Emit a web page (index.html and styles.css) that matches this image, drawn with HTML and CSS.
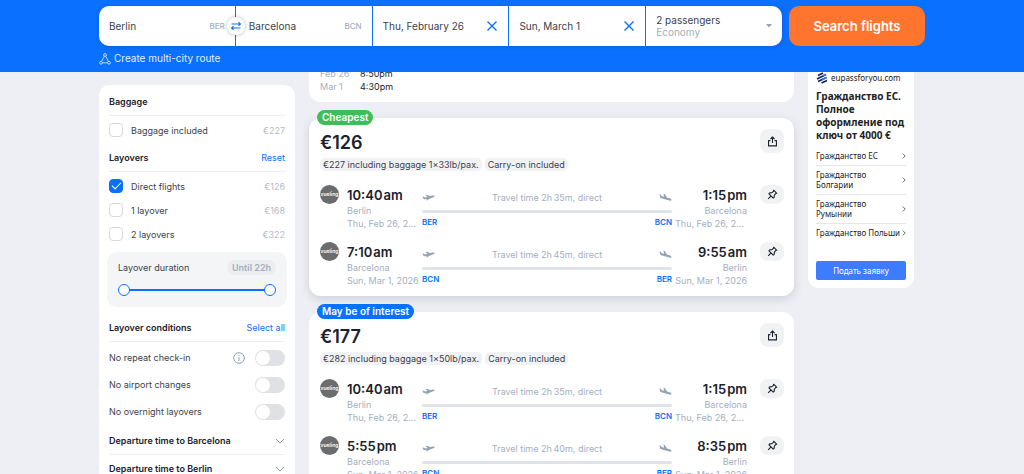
FILE: index.html
```html
<!DOCTYPE html>
<html lang="en">
<head>
<meta charset="utf-8">
<title>Berlin – Barcelona flights</title>
<link rel="stylesheet" href="styles.css">
</head>
<body>
<svg class="sprite" aria-hidden="true">
  <symbol id="takeoff" viewBox="0 0 26 16"><path d="M1 6.500 3 6 6 8 11 6.800 7 3 9.500 2.300 16.500 5.200 21.500 4C23.500 3.500 25 4 25.200 5 25.400 6.200 24.300 7 22.500 7.600L16 9.800 10 13.500 7.500 14 10 11 5.500 11.500C3.800 11.600 3 11 2.600 10.200Z"/></symbol>
  <symbol id="landing" viewBox="0 0 26 18"><path d="M1 2.500 3 3 5.200 6 10 7.400 9 1.500 11.500 2.200 16 9 21 10.500C23.500 11.300 25.200 12.700 24.900 14 24.600 15.400 22.600 15.800 20.500 15.200L4.500 10.600C3 10.100 2.200 9.300 2 8Z"/></symbol>
  <symbol id="share" viewBox="0 0 12 12"><path d="M3.700 5H1.700v5.800h8.600V5H8.300M6 7.700V1.300M3.700 3.400 6 1.100l2.300 2.300"/></symbol>
  <symbol id="pin" viewBox="0 0 12 12"><path d="M7.300 1.300 10.700 4.700 9.500 5 8 6.600 7.800 9.100 6.800 9.900 2.100 5.200 2.900 4.200 5.400 4 7 2.500ZM4.400 7.600 1.300 10.700"/></symbol>
  <symbol id="cross" viewBox="0 0 12 12"><path d="m1.500 1.500 9 9m0-9-9 9"/></symbol>
  <symbol id="down" viewBox="0 0 10 6"><path d="m1 1 4 4 4-4"/></symbol>
  <symbol id="right" viewBox="0 0 4 6"><path d="m.8.600 2.400 2.400L.8 5.400"/></symbol>
</svg>

<header class="header">
  <form class="search">
    <div class="fields">
      <div class="field">
        <input class="field-input" aria-label="From" value="Berlin"><span class="code">BER</span>
        <button class="swap" type="button" aria-label="Swap cities"><svg viewBox="0 0 10 8"><path d="M.5 2h8.700M.8 6h8.700M7.500.300 9.500 2 7.500 3.700M2.500 4.300.500 6l2 1.700"/></svg></button>
      </div>
      <div class="field">
        <input class="field-input" aria-label="To" value="Barcelona"><span class="code">BCN</span>
      </div>
      <div class="field">
        <input class="field-input" aria-label="Departure date" value="Thu, February 26">
        <button class="clear" type="button" aria-label="Clear departure date"><svg><use href="#cross"/></svg></button>
      </div>
      <div class="field">
        <input class="field-input" aria-label="Return date" value="Sun, March 1">
        <button class="clear" type="button" aria-label="Clear return date"><svg><use href="#cross"/></svg></button>
      </div>
      <button class="field passengers" type="button">
        <span class="passengers-text"><span>2 passengers</span><span class="cabin">Economy</span></span>
        <svg class="caret" viewBox="0 0 6 4"><path d="M0 0h6L3 3.500Z"/></svg>
      </button>
    </div>
    <button class="submit" type="submit">Search flights</button>
  </form>
  <a class="multi" href="#"><svg viewBox="0 0 12 12"><path d="M5.300 3.300 2.600 8.400M6.700 3.300l2.700 5.100M3.300 9.800h5.400"/><circle cx="6" cy="2" r="1.400"/><circle cx="2" cy="9.800" r="1.400"/><circle cx="10" cy="9.800" r="1.400"/></svg>Create multi-city route</a>
</header>

<main class="page">
  <aside class="filters">
    <section>
      <div class="heading"><h2>Baggage</h2></div>
      <div class="list">
        <label class="option"><input type="checkbox"><span>Baggage included</span><span class="cost">€227</span></label>
      </div>
    </section>
    <section>
      <div class="heading"><h2>Layovers</h2><button class="text-button" type="button">Reset</button></div>
      <div class="list">
        <label class="option"><input type="checkbox" checked><span>Direct flights</span><span class="cost">€126</span></label>
        <label class="option"><input type="checkbox"><span>1 layover</span><span class="cost">€168</span></label>
        <label class="option"><input type="checkbox"><span>2 layovers</span><span class="cost">€322</span></label>
      </div>
      <div class="duration">
        <div class="duration-top"><span>Layover duration</span><span class="until">Until 22h</span></div>
        <div class="range">
          <input type="range" min="0" max="22" value="0" aria-label="Minimum layover duration">
          <input type="range" min="0" max="22" value="22" aria-label="Maximum layover duration">
        </div>
      </div>
    </section>
    <section>
      <div class="heading"><h2>Layover conditions</h2><button class="text-button" type="button">Select all</button></div>
      <div class="list">
        <label class="toggle"><span>No repeat check-in</span><svg class="info" viewBox="0 0 12 12"><circle cx="6" cy="6" r="5.300"/><path d="M6 5.300v3.500M6 3.100v1.100"/></svg><input type="checkbox" role="switch"></label>
        <label class="toggle"><span>No airport changes</span><input type="checkbox" role="switch"></label>
        <label class="toggle"><span>No overnight layovers</span><input type="checkbox" role="switch"></label>
      </div>
    </section>
    <section>
      <button class="heading fold" type="button"><span>Departure time to Barcelona</span><svg><use href="#down"/></svg></button>
      <button class="heading fold" type="button"><span>Departure time to Berlin</span><svg><use href="#down"/></svg></button>
    </section>
  </aside>

  <div class="results">
    <article class="card schedule">
      <dl>
        <dt>Feb 26</dt><dd>8:50pm</dd>
        <dt>Mar 1</dt><dd>4:30pm</dd>
      </dl>
    </article>

    <article class="card ticket raised">
      <span class="badge cheapest">Cheapest</span>
      <div class="ticket-head"><h3>€126</h3><button class="tool share" type="button" aria-label="Share"><svg><use href="#share"/></svg></button></div>
      <div class="chips"><span>€227 including baggage 1×33lb/pax.</span><span>Carry-on included</span></div>
      <div class="legs">
        <div class="leg">
          <span class="logo">vueling</span>
          <div class="stop"><b>10:40&#8202;am</b><span>Berlin</span><span>Thu, Feb 26, 2...</span></div>
          <div class="track">
            <div class="track-top"><svg><use href="#takeoff"/></svg><span>Travel time 2h&#8201;35m, direct</span><svg><use href="#landing"/></svg></div>
            <div class="line"></div>
            <div class="codes"><span>BER</span><span>BCN</span></div>
          </div>
          <div class="stop arrive"><b>1:15&#8202;pm</b><span>Barcelona</span><span class="long">Thu, Feb 26, 2...</span></div>
          <button class="tool" type="button" aria-label="Pin flight"><svg><use href="#pin"/></svg></button>
        </div>
        <div class="leg">
          <span class="logo">vueling</span>
          <div class="stop"><b>7:10&#8202;am</b><span>Barcelona</span><span>Sun, Mar 1, 2026</span></div>
          <div class="track">
            <div class="track-top"><svg><use href="#takeoff"/></svg><span>Travel time 2h&#8201;45m, direct</span><svg><use href="#landing"/></svg></div>
            <div class="line"></div>
            <div class="codes"><span>BCN</span><span>BER</span></div>
          </div>
          <div class="stop arrive"><b>9:55&#8202;am</b><span>Berlin</span><span>Sun, Mar 1, 2026</span></div>
          <button class="tool" type="button" aria-label="Pin flight"><svg><use href="#pin"/></svg></button>
        </div>
      </div>
    </article>

    <article class="card ticket">
      <span class="badge">May be of interest</span>
      <div class="ticket-head"><h3>€177</h3><button class="tool share" type="button" aria-label="Share"><svg><use href="#share"/></svg></button></div>
      <div class="chips"><span>€282 including baggage 1×50lb/pax.</span><span>Carry-on included</span></div>
      <div class="legs">
        <div class="leg">
          <span class="logo">vueling</span>
          <div class="stop"><b>10:40&#8202;am</b><span>Berlin</span><span>Thu, Feb 26, 2...</span></div>
          <div class="track">
            <div class="track-top"><svg><use href="#takeoff"/></svg><span>Travel time 2h&#8201;35m, direct</span><svg><use href="#landing"/></svg></div>
            <div class="line"></div>
            <div class="codes"><span>BER</span><span>BCN</span></div>
          </div>
          <div class="stop arrive"><b>1:15&#8202;pm</b><span>Barcelona</span><span class="long">Thu, Feb 26, 2...</span></div>
          <button class="tool" type="button" aria-label="Pin flight"><svg><use href="#pin"/></svg></button>
        </div>
        <div class="leg">
          <span class="logo">vueling</span>
          <div class="stop"><b>5:55&#8202;pm</b><span>Barcelona</span><span>Sun, Mar 1, 2026</span></div>
          <div class="track">
            <div class="track-top"><svg><use href="#takeoff"/></svg><span>Travel time 2h&#8201;40m, direct</span><svg><use href="#landing"/></svg></div>
            <div class="line"></div>
            <div class="codes"><span>BCN</span><span>BER</span></div>
          </div>
          <div class="stop arrive"><b>8:35&#8202;pm</b><span>Berlin</span><span>Sun, Mar 1, 2026</span></div>
          <button class="tool" type="button" aria-label="Pin flight"><svg><use href="#pin"/></svg></button>
        </div>
      </div>
    </article>
  </div>

  <aside class="ad" lang="ru">
    <div class="ad-site"><svg viewBox="0 0 12 12"><path d="M2 3.500 7 1M1 7l9-4.500M2 9.500l8.500-4M5.500 11 11 8.500" stroke="#16235e"/><path d="m7 3.800 3-1.500M6 7.500l4.500-2" stroke="#3d7bf5"/></svg>eupassforyou.com</div>
    <h3>Гражданство ЕС. Полное оформление под ключ от 4000 €</h3>
    <nav>
      <a href="#"><span>Гражданство ЕС</span><svg><use href="#right"/></svg></a>
      <a href="#"><span>Гражданство Болгарии</span><svg><use href="#right"/></svg></a>
      <a href="#"><span>Гражданство Румынии</span><svg><use href="#right"/></svg></a>
      <a href="#"><span>Гражданство Польши</span><svg><use href="#right"/></svg></a>
    </nav>
    <button class="apply" type="button">Подать заявку</button>
  </aside>
</main>
</body>
</html>
```

FILE: styles.css
```css
:root {
  --blue: #0a70ff;
  --ink: #1b222d;
  --text: #3b424d;
  --muted: #a3afbf;
  --rule: #eceef1;
}

* { box-sizing: border-box; }

body {
  height: 100vh;
  margin: 0;
  overflow: hidden;
  background: #eeeff4;
  color: var(--text);
  font: 9px/13px Inter, "Liberation Sans", sans-serif;
}

h2, h3, dl, dd { margin: 0; }
button, input { font: inherit; color: inherit; margin: 0; }
button { padding: 0; border: 0; background: none; cursor: pointer; }
a { color: inherit; text-decoration: none; }
svg { flex: none; fill: none; }
.sprite { display: none; }

/* Header */
.header {
  position: fixed;
  inset: 0 0 auto;
  z-index: 2;
  padding: 6px max(16px, calc(50% - 413px)) 7px;
  background: var(--blue);
}
.search { display: flex; gap: 7px; height: 40px; }
.fields {
  flex: 1;
  display: grid;
  grid-template-columns: repeat(5, minmax(0, 1fr));
  gap: 1px;
  border-radius: 10px;
  box-shadow: 0 1px 4px rgba(0, 40, 120, .2);
}
.field {
  position: relative;
  display: flex;
  align-items: center;
  padding: 0 10px;
  background: #fff;
  font-size: 10px;
}
.field:first-child { border-radius: 10px 0 0 10px; }
.field:nth-child(2) { padding-left: 13px; }
.field:last-child { border-radius: 0 10px 10px 0; }
.field-input {
  flex: 1;
  min-width: 0;
  padding: 0;
  border: 0;
  outline: 0;
  background: none;
}
.code { color: var(--muted); font-size: 8px; font-weight: 500; }
.swap {
  position: absolute;
  right: -10px;
  z-index: 1;
  width: 18px;
  height: 18px;
  display: grid;
  place-items: center;
  border-radius: 50%;
  background: #fff;
  box-shadow: 0 0 4px rgba(0, 30, 80, .3);
}
.swap svg { width: 10px; height: 8px; stroke: var(--blue); stroke-width: 1.2; }
.clear { display: flex; }
.clear svg { width: 12px; height: 12px; stroke: var(--blue); stroke-width: 1.4; }
.passengers { justify-content: space-between; text-align: left; line-height: 12px; }
.passengers-text { display: grid; }
.cabin { color: var(--muted); }
.caret { width: 6px; height: 4px; fill: #96a3b5; }
.submit {
  width: 136px;
  border-radius: 10px;
  background: #ff752e;
  color: #fff;
  font-size: 13px;
  font-weight: 600;
}
.multi {
  display: flex;
  width: fit-content;
  align-items: center;
  gap: 3px;
  margin-top: 6px;
  color: #e3efff;
  font-size: 10px;
}
.multi svg { width: 12px; height: 12px; stroke: #cfe2ff; stroke-width: .9; }

/* Page columns */
.page {
  display: grid;
  grid-template-columns: 196px minmax(0, 1fr) 106px;
  gap: 14px;
  align-items: start;
  max-width: 826px;
  margin: 0 auto;
  padding-right: 11px;
}

/* Filters */
.filters {
  margin-top: 85px;
  padding: 3px 10px;
  border-radius: 11px;
  background: #fff;
}
.filters section { margin-bottom: 2px; }
.heading {
  display: flex;
  align-items: center;
  justify-content: space-between;
  width: 100%;
  height: 28px;
  border-bottom: 1px solid var(--rule);
  color: var(--ink);
  font-weight: 600;
}
.heading h2 { font-size: 9px; font-weight: 600; }
.text-button { color: var(--blue); font-weight: 400; }
.list { padding-top: 2px; }
.option { display: flex; align-items: center; gap: 8px; height: 24px; }
.option input {
  appearance: none;
  width: 14px;
  height: 14px;
  border: 1px solid #d7d9de;
  border-radius: 4px;
  background: #fff;
}
.option input:checked { border-color: var(--blue); background: var(--blue); display: grid; place-items: center; }
.option input:checked::after {
  content: "";
  width: 8px;
  height: 4px;
  margin-bottom: 3px;
  border: solid #fff;
  border-width: 0 0 1px 1px;
  rotate: -45deg;
}
.cost { margin-left: auto; color: #b7bbc8; }
.duration {
  margin: 6px -2px 7px;
  padding: 8px 11px 11px;
  border-radius: 10px;
  background: #f4f5f7;
}
.duration-top { display: flex; align-items: center; justify-content: space-between; }
.until {
  padding: 1px 5px;
  border-radius: 8px;
  background: #ebedf0;
  color: var(--muted);
  font-weight: 600;
}
.range {
  display: grid;
  align-items: center;
  height: 12px;
  margin-top: 9px;
  background: linear-gradient(var(--blue), var(--blue)) center / 90% 2px no-repeat;
}
.range input {
  grid-area: 1 / 1;
  appearance: none;
  width: 100%;
  height: 12px;
  background: none;
  pointer-events: none;
}
.range input::-webkit-slider-thumb {
  appearance: none;
  width: 12px;
  height: 12px;
  border: 1px solid var(--blue);
  border-radius: 50%;
  background: #fff;
  pointer-events: auto;
}
.toggle { display: flex; align-items: center; gap: 10px; height: 27px; }
.toggle span { flex: 1; }
.toggle input {
  appearance: none;
  width: 30px;
  height: 16px;
  padding: 1px;
  border-radius: 8px;
  background: #e0e1e5;
}
.toggle input::before {
  content: "";
  display: block;
  width: 14px;
  height: 14px;
  border-radius: 50%;
  background: #fff;
}
.info { width: 12px; height: 12px; stroke: #8e9db3; stroke-width: 1; }
.fold svg { width: 10px; height: 6px; stroke: #8e9db3; stroke-width: 1; }

/* Results */
.results { display: grid; gap: 16px; }
.card { border-radius: 12px; background: #fff; }
.raised { box-shadow: 0 3px 10px rgba(40, 50, 80, .16); }
.schedule { padding: 67px 11px 9px; }
.schedule dl { display: grid; grid-template-columns: 40px 1fr; }
.schedule dt { color: var(--muted); }
.schedule dd { color: var(--ink); }
.ticket { position: relative; padding: 11px 10px 9px 11px; }
.badge {
  position: absolute;
  top: -8px;
  left: 8px;
  padding: 1px 5px;
  border-radius: 8px;
  background: var(--blue);
  color: #fff;
  font-size: 10px;
  font-weight: 600;
}
.cheapest { background: #3ebd58; }
.ticket-head { display: flex; justify-content: space-between; color: var(--ink); }
.ticket-head h3 { padding-top: 4px; font-size: 18px; line-height: 20px; font-weight: 600; }
.tool {
  display: grid;
  place-items: center;
  width: 24px;
  height: 19px;
  border-radius: 8px;
  background: #f1f2f4;
}
.tool svg { width: 11px; height: 11px; stroke: var(--ink); stroke-width: 1.2; stroke-linejoin: round; }
.share { height: 24px; }
.chips { display: flex; gap: 3px; margin-top: 5px; }
.chips span { padding: 0 3px; border-radius: 5px; background: #f1f2f4; }
.legs { display: grid; gap: 12px; margin-top: 14px; }
.leg {
  display: grid;
  grid-template-columns: 27px 75px minmax(0, 1fr) 75px 37px;
}
.leg .tool { justify-self: end; }
.logo {
  display: grid;
  place-items: center;
  width: 19px;
  height: 19px;
  border-radius: 50%;
  background: #6b6c6e;
  color: #fff;
  font-size: 5px;
  font-weight: 600;
}
.stop {
  display: grid;
  align-content: start;
  padding-top: 1px;
  color: var(--muted);
  white-space: nowrap;
}
.stop b { color: var(--ink); font-size: 13px; line-height: 18px; font-weight: 600; }
.arrive { text-align: right; }
.long { padding-right: 3px; }
.track-top {
  display: flex;
  align-items: center;
  justify-content: space-between;
  height: 25px;
  padding-bottom: 1px;
  color: var(--muted);
}
.track-top svg { width: 13px; height: 9px; fill: #96a3b5; }
.line { height: 3px; border-radius: 2px; background: #dfe4eb; }
.codes { display: flex; justify-content: space-between; padding-top: 3px; color: var(--blue); font-size: 8px; font-weight: 600; }

/* Advert */
.ad {
  padding: 71px 8px 8px;
  border-radius: 0 0 11px 11px;
  background: #fff;
  color: #222;
  font: 8px/10px "Noto Sans", sans-serif;
}
.ad-site { display: flex; align-items: center; gap: 3px; height: 13px; }
.ad-site svg { width: 12px; height: 12px; stroke-width: 1.7; }
.ad h3 { margin: 6px 0 5px; font-size: 10px; line-height: 13px; font-weight: 700; }
.ad nav a { display: flex; align-items: center; justify-content: space-between; padding: 4px 0; }
.ad nav a + a { border-top: 1px solid #e6e6e6; }
.ad nav svg { width: 4px; height: 6px; stroke: #444; stroke-width: .8; }
.apply { width: 100%; height: 19px; margin-top: 19px; border-radius: 2px; background: #3d7bff; color: #fff; }
```
